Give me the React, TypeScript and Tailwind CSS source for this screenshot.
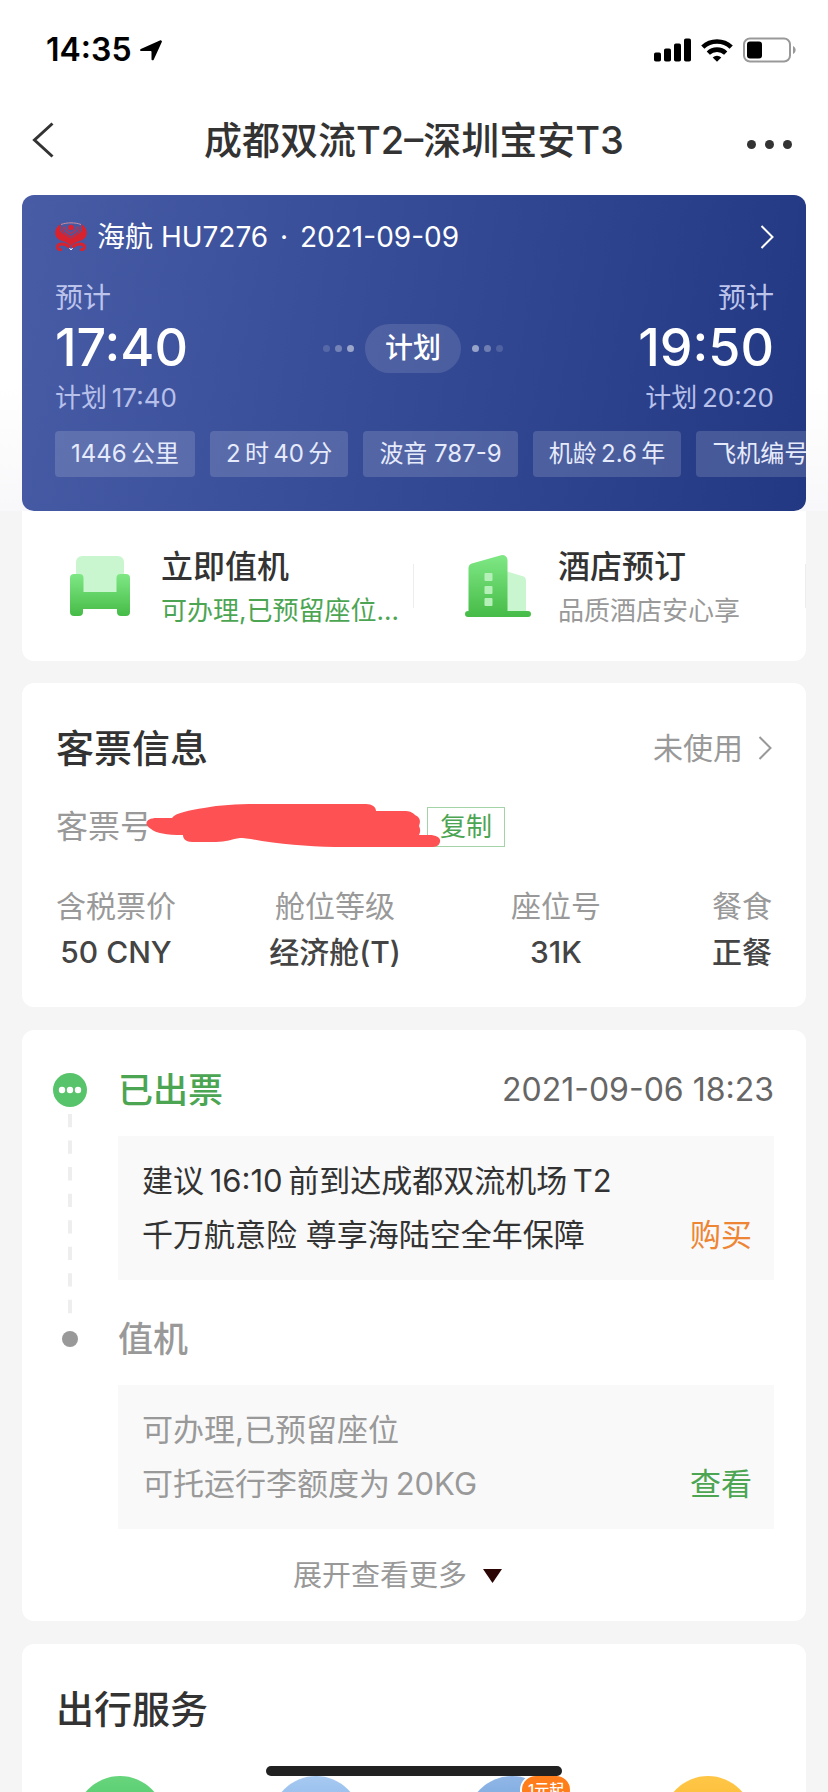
import React from "react";

// U+2009 keeps the gap between Chinese characters and digits narrow
const tags = ["1446\u2009公里", "2\u2009时\u200940\u2009分", "波音 787-9", "机龄\u20092.6\u2009年", "飞机编号"];

const ticketFields = [
  { label: "含税票价", value: "50 CNY", align: "justify-self-start" },
  { label: "舱位等级", value: "经济舱(T)", align: "justify-self-center" },
  { label: "座位号", value: "31K", align: "justify-self-center" },
  { label: "餐食", value: "正餐", align: "justify-self-end" },
];

const services = [
  { name: "green", color: "bg-linear-to-b from-[#66d57c] to-[#3fb95a]" },
  { name: "sky", color: "bg-linear-to-b from-[#a6c9f1] to-[#6fa3e0]" },
  { name: "blue", color: "bg-linear-to-b from-[#8fb6e6] to-[#5f93d4]", badge: "1元起" },
  { name: "yellow", color: "bg-linear-to-b from-[#ffc646] to-[#f9ad1e]" },
];

const Chevron = ({ className }: { className: string }) => (
  <svg viewBox="0 0 14 24" className={className} fill="none" stroke="currentColor">
    <path d="M1.5 1 12.5 12 1.5 23" />
  </svg>
);

const StatusBar = () => (
  <div className="flex h-[100px] items-center justify-between pr-8 pl-[46px] text-black">
    <div className="flex items-center gap-2">
      <span className="text-[32px] leading-10 font-semibold">14:35</span>
      <svg width="22" height="21" viewBox="0 0 22 21" fill="currentColor">
        <path d="M20.4.3a1.2 1.2 0 0 1 1.4 1.6L13.7 19.7c-.5 1.1-2.2.8-2.2-.5v-7.4c0-.5-.3-.8-.8-.8H1.3C0 11-.4 9.400.8 8.900Z" />
      </svg>
    </div>
    <div className="flex items-center gap-2.5">
      <svg width="37" height="24" viewBox="0 0 37 24" fill="currentColor">
        <rect x="0" y="14.5" width="7" height="9" rx="1.8" />
        <rect x="10" y="10.5" width="7" height="13" rx="1.8" />
        <rect x="20" y="5.5" width="7" height="18" rx="1.8" />
        <rect x="30" y="0.5" width="7" height="23" rx="1.8" />
      </svg>
      <svg width="32" height="24" viewBox="0 0 32 24" fill="none" stroke="currentColor" strokeWidth="4.6">
        <path d="M1.8 9.200a20.5 20.5 0 0 1 28.4 0" />
        <path d="M7.3 15.100a12.5 12.5 0 0 1 17.4 0" />
        <path d="M16 23.8 11.7 19.600a6.2 6.2 0 0 1 8.6 0Z" fill="currentColor" stroke="none" />
      </svg>
      <svg width="53" height="26" viewBox="0 0 53 26" fill="none">
        <rect x="1" y="1.5" width="46" height="23" rx="6" stroke="#999" strokeWidth="2" />
        <rect x="4" y="4.5" width="15" height="17" rx="3" fill="#000" />
        <path d="M50 9v8c3.500-1.500 3.500-6.500 0-8Z" fill="#999" />
      </svg>
    </div>
  </div>
);

const AirlineLogo = () => (
  <svg width="32" height="30" viewBox="0 0 32 30" fill="none">
    <path
      d="M6 2C1.500 4.500-.2 8 .3 12c.6 4 3.700 6.300 7.700 7.300 3 .8 6 2.400 8 4.700 2-2.300 5-3.900 8-4.700 4-1 7.100-3.300 7.700-7.300.5-4-1.200-7.500-5.700-10 2 4 1 7.500-2.500 9.800L16 16.500l-7.500-4.700C5 9.500 4 6 6 2Z"
      fill="#d8232f"
    />
    <path d="M7 4.500c-1 4 2 6.500 9 10.500 7-4 10-6.500 9-10.500" stroke="#c9293c" strokeWidth="1.6" />
    <path d="M10 4.500c-.5 3 2 4.700 6 7 4-2.300 6.500-4 6-7" stroke="#b7334f" strokeWidth="1.4" />
    <path d="M6 2.500C12 .3 20 .3 26 2.500" stroke="#c98a9f" strokeWidth="1" />
    <circle cx="16" cy="5.5" r="2.8" fill="#e0202c" />
    <path
      d="M14.500 25.500C12.500 23 10 22 7 22c-3 0-4.500 1.200-4.500 3.200S5 28.300 6.500 27M17.500 25.500C19.500 23 22 22 25 22c3 0 4.500 1.200 4.500 3.200s-2.500 3.100-4 1.800"
      stroke="#d8232f"
      strokeWidth="3"
    />
    <path d="m14.500 26 1.500 2 1.500-2" stroke="#fff" strokeWidth="1" />
  </svg>
);

const SeatIcon = () => (
  <svg width="60" height="60" viewBox="0 0 60 60" className="shrink-0">
    <defs>
      <linearGradient id="seat" x1="0" y1="0" x2="0" y2="1">
        <stop offset="0" stopColor="#7fe885" />
        <stop offset="1" stopColor="#46bb47" />
      </linearGradient>
    </defs>
    <path d="M12 0h36a6 6 0 0 1 6 6v34H6V6a6 6 0 0 1 6-6Z" fill="#c9f6cf" />
    <path
      d="M4 18h5.500a4 4 0 0 1 4 4v14h33V22a4 4 0 0 1 4-4H56a4 4 0 0 1 4 4v34a4 4 0 0 1-4 4h-5a4 4 0 0 1-4-4v-3H13v3a4 4 0 0 1-4 4H4a4 4 0 0 1-4-4V22a4 4 0 0 1 4-4Z"
      fill="url(#seat)"
    />
  </svg>
);

const HotelIcon = () => (
  <svg width="66" height="62" viewBox="0 0 66 62" className="shrink-0">
    <defs>
      <linearGradient id="hotel" x1="0" y1="0" x2="0" y2="1">
        <stop offset="0" stopColor="#7fe885" />
        <stop offset="1" stopColor="#46bb47" />
      </linearGradient>
    </defs>
    <path d="m42 16.500 15 4.500a5 5 0 0 1 4 5v31H42Z" fill="#c9f6cf" />
    <path
      d="M3.500 56V13a5 5 0 0 1 3.300-4.600L36 .3a5 5 0 0 1 6.500 4.700v51H63a3 3 0 0 1 0 6H3a3 3 0 0 1 0-6Z"
      fill="url(#hotel)"
    />
    <g fill="#b5f0b8">
      <rect x="19.5" y="18" width="8" height="8" rx="1" />
      <rect x="19.5" y="31" width="8" height="8" rx="1" />
      <rect x="19.5" y="43" width="8" height="8" rx="1" />
    </g>
  </svg>
);

const FlightCard = () => (
  <section className="flex h-[316px] flex-col overflow-hidden rounded-xl bg-linear-100 from-[#485ca6] to-[#223883] pl-[33px] text-white">
    <a href="#flight" className="flex items-center pt-5 pr-8">
      <AirlineLogo />
      <span className="ml-2.5 flex-1 text-[28px] leading-[44px]">
        海航 HU7276 <span className="mx-1">·</span> 2021-09-09
      </span>
      <Chevron className="h-6 w-3.5 stroke-2" />
    </a>

    <div className="flex items-center justify-between pt-4 pr-8">
      <div className="flex flex-col">
        <span className="text-[28px] leading-[46px] text-[#bcc4ec]">预计</span>
        <span className="text-[52px] leading-[54px] font-medium">17:40</span>
        <span className="text-[26px] leading-[46px] text-[#b7c0ea]">计划{"\u2009"}17:40</span>
      </div>
      <div className="flex items-center gap-[11px]">
        <div className="flex gap-[5px]">
          <i className="size-[7px] rounded-full bg-white/15" />
          <i className="size-[7px] rounded-full bg-white/30" />
          <i className="size-[7px] rounded-full bg-white/50" />
        </div>
        <span className="rounded-full bg-white/12 px-5 text-[28px] leading-[49px] font-medium">计划</span>
        <div className="flex gap-[5px]">
          <i className="size-[7px] rounded-full bg-white/50" />
          <i className="size-[7px] rounded-full bg-white/30" />
          <i className="size-[7px] rounded-full bg-white/15" />
        </div>
      </div>
      <div className="flex flex-col items-end">
        <span className="text-[28px] leading-[46px] text-[#bcc4ec]">预计</span>
        <span className="text-[52px] leading-[54px] font-medium">19:50</span>
        <span className="text-[26px] leading-[46px] text-[#b7c0ea]">计划{"\u2009"}20:20</span>
      </div>
    </div>

    <ul className="flex gap-[15px] pt-2.5">
      {tags.map((tag) => (
        <li
          key={tag}
          className="shrink-0 rounded-sm bg-white/15 px-4 text-[24px] leading-[46px] whitespace-nowrap text-[#e6ebfc]"
        >
          {tag}
        </li>
      ))}
    </ul>
  </section>
);

const QuickActions = () => (
  <section className="grid h-[150px] grid-cols-2 rounded-b-xl bg-white">
    <a href="#checkin" className="flex items-center gap-[31px] pl-12">
      <SeatIcon />
      <div className="min-w-0 flex-1 pt-1">
        <p className="text-[32px] leading-[46px] font-medium text-[#333]">立即值机</p>
        <p className="text-[26px] leading-[42px] whitespace-nowrap text-[#4ca552]">可办理,已预留座位...</p>
      </div>
      <i className="h-11 w-px bg-[#ededed]" />
    </a>
    <a href="#hotel" className="flex items-center gap-[27px] pl-[51px]">
      <HotelIcon />
      <div className="min-w-0 flex-1 pt-1">
        <p className="text-[32px] leading-[46px] font-medium text-[#333]">酒店预订</p>
        <p className="text-[26px] leading-[42px] text-[#999]">品质酒店安心享</p>
      </div>
      <i className="h-11 w-px bg-[#ededed]" />
    </a>
  </section>
);

const TicketCard = () => (
  <section className="mt-[22px] h-[324px] rounded-xl bg-white px-[34px] pt-10">
    <div className="flex items-center justify-between">
      <h2 className="text-[38px] leading-[50px] font-medium text-[#333]">客票信息</h2>
      <a href="#ticket" className="flex items-center gap-[15px] text-[30px] leading-[50px] text-[#999]">
        未使用
        <Chevron className="h-6 w-3.5 stroke-2" />
      </a>
    </div>

    <div className="relative mt-[34px] flex items-center justify-between">
      <span className="text-[32px] leading-10 text-[#999]">客票号</span>
      <svg
        width="295"
        height="44"
        viewBox="0 0 295 44"
        className="absolute -top-[3px] left-[90px] z-10"
        fill="#fe5153"
      >
        <path d="M11 14h15c3-5 18-8 32-10C74 1 90 0 110 0h110c6 0 10 3 10 7h30c5 0 8 3 9 4 5 2 6 6 4 11 2 4 1 7 0 9h10c8 0 12 3 11 7-1 4-4 5-9 5H200c-30 0-55-2-84-6-10-2-18-3-22-3-8 1-14 4-24 4H46c-6 0-9-3-9-7C20 31 10 29 5 25-3 20 0 14 11 14Z" />
      </svg>
      <button
        type="button"
        className="mr-[267px] h-10 w-[78px] border border-[#a5d3a8] text-[26px] leading-9 text-[#4ca552]"
      >
        复制
      </button>
    </div>

    <dl className="mt-9 grid grid-cols-[124fr_310fr_132fr_150fr]">
      {ticketFields.map(({ label, value, align }) => (
        <div key={label} className={`text-center ${align}`}>
          <dt className="text-[30px] leading-[46px] text-[#999]">{label}</dt>
          <dd className="text-[30px] leading-[46px] font-medium text-[#444]">{value}</dd>
        </div>
      ))}
    </dl>
  </section>
);

const Timeline = () => (
  <section className="mt-[23px] h-[591px] rounded-xl bg-white pt-[35px] pr-8 pl-[31px]">
    <div className="flex gap-[31px]">
      <div className="flex w-[34px] flex-col items-center pt-2">
        <svg width="34" height="34" viewBox="0 0 34 34">
          <circle cx="17" cy="17" r="17" fill="#57c46b" />
          <g fill="#fff">
            <circle cx="9" cy="17" r="3.2" />
            <circle cx="17" cy="17" r="3.2" />
            <circle cx="25" cy="17" r="3.2" />
          </g>
        </svg>
        <svg width="4" height="200" viewBox="0 0 4 200" className="mt-[7px]">
          <path d="M2 0v200" stroke="#eee" strokeWidth="4" strokeDasharray="13.3 13.25" />
        </svg>
      </div>
      <div className="flex-1">
        <div className="flex items-center justify-between">
          <h3 className="text-[35px] leading-[50px] font-medium text-[#4ca552]">已出票</h3>
          <time className="text-[32px] leading-[50px] text-[#666]">2021-09-06 18:23</time>
        </div>
        <div className="mt-[21px] bg-[#f9f9f9] py-[18px] pr-[22px] pl-6 text-[31px] leading-[54px] text-[#333]">
          <p>建议{"\u2009"}16:10{"\u2009"}前到达成都双流机场{"\u2009"}T2</p>
          <p className="flex justify-between">
            千万航意险 尊享海陆空全年保障
            <a href="#insurance" className="text-[#ee8534]">
              购买
            </a>
          </p>
        </div>
      </div>
    </div>

    <div className="flex gap-[31px]">
      <div className="flex w-[34px] flex-col items-center pt-[17px]">
        <i className="size-4 rounded-full bg-[#999]" />
      </div>
      <div className="flex-1">
        <h3 className="text-[35px] leading-[50px] font-medium text-[#999]">值机</h3>
        <div className="mt-[21px] bg-[#f9f9f9] py-[18px] pr-[22px] pl-6 text-[31px] leading-[54px] text-[#999]">
          <p>可办理,已预留座位</p>
          <p className="flex justify-between">
            <span>可托运行李额度为{"\u2009"}20KG</span>
            <a href="#baggage" className="text-[#4ca552]">
              查看
            </a>
          </p>
        </div>
      </div>
    </div>

    <button
      type="button"
      className="mx-auto mt-6 flex items-center gap-4 pr-8 text-[29px] leading-[46px] text-[#999]"
    >
      展开查看更多
      <svg width="19" height="14" viewBox="0 0 19 14" fill="#2c0505">
        <path d="M0 0h19L9.5 14Z" />
      </svg>
    </button>
  </section>
);

const Services = () => (
  <section className="mt-[23px] rounded-t-xl bg-white pt-10">
    <h2 className="pl-[34px] text-[38px] leading-[50px] font-medium text-[#333]">出行服务</h2>
    <div className="mt-[42px] grid grid-cols-4 pb-10">
      {services.map(({ name, color, badge }) => (
        <a
          key={name}
          href={`#${name}`}
          aria-label={name}
          className={`relative size-[90px] justify-self-center rounded-full ${color}`}
        >
          {badge && (
            <span className="absolute -top-0.5 left-[53px] rounded-[16px] border-2 border-white bg-[#ff7d1a] px-1.5 text-[15px] leading-[28px] font-medium whitespace-nowrap text-white">
              {badge}
            </span>
          )}
        </a>
      ))}
    </div>
  </section>
);

export default function App() {
  return (
    <div className="relative h-screen overflow-hidden bg-[#f5f5f5] font-['Inter','Noto_Sans_CJK_SC',sans-serif]">
      <div className="bg-linear-to-b from-white from-75% to-[#f8f8fa]">
        <StatusBar />
        <header className="flex h-[95px] items-center justify-between px-8 pb-[15px] text-[#333]">
          <button type="button" aria-label="返回" className="w-12">
            <svg width="22" height="36" viewBox="0 0 22 36" fill="none" stroke="currentColor" strokeWidth="3">
              <path d="M20.5 1.5 2.5 18l18 16.500" />
            </svg>
          </button>
          <h1 className="text-[38px] leading-[50px] font-medium">成都双流T2–深圳宝安T3</h1>
          <button type="button" aria-label="更多" className="flex w-12 justify-end gap-[9px] pt-2 pr-1">
            <i className="size-[9px] shrink-0 rounded-full bg-current" />
            <i className="size-[9px] shrink-0 rounded-full bg-current" />
            <i className="size-[9px] shrink-0 rounded-full bg-current" />
          </button>
        </header>
        <div className="px-[22px]">
          <FlightCard />
        </div>
      </div>

      <main className="px-[22px]">
        <QuickActions />
        <TicketCard />
        <Timeline />
        <Services />
      </main>

      <div className="absolute bottom-4 left-1/2 h-2.5 w-[296px] -translate-x-1/2 rounded-full bg-[#212121]" />
    </div>
  );
}
